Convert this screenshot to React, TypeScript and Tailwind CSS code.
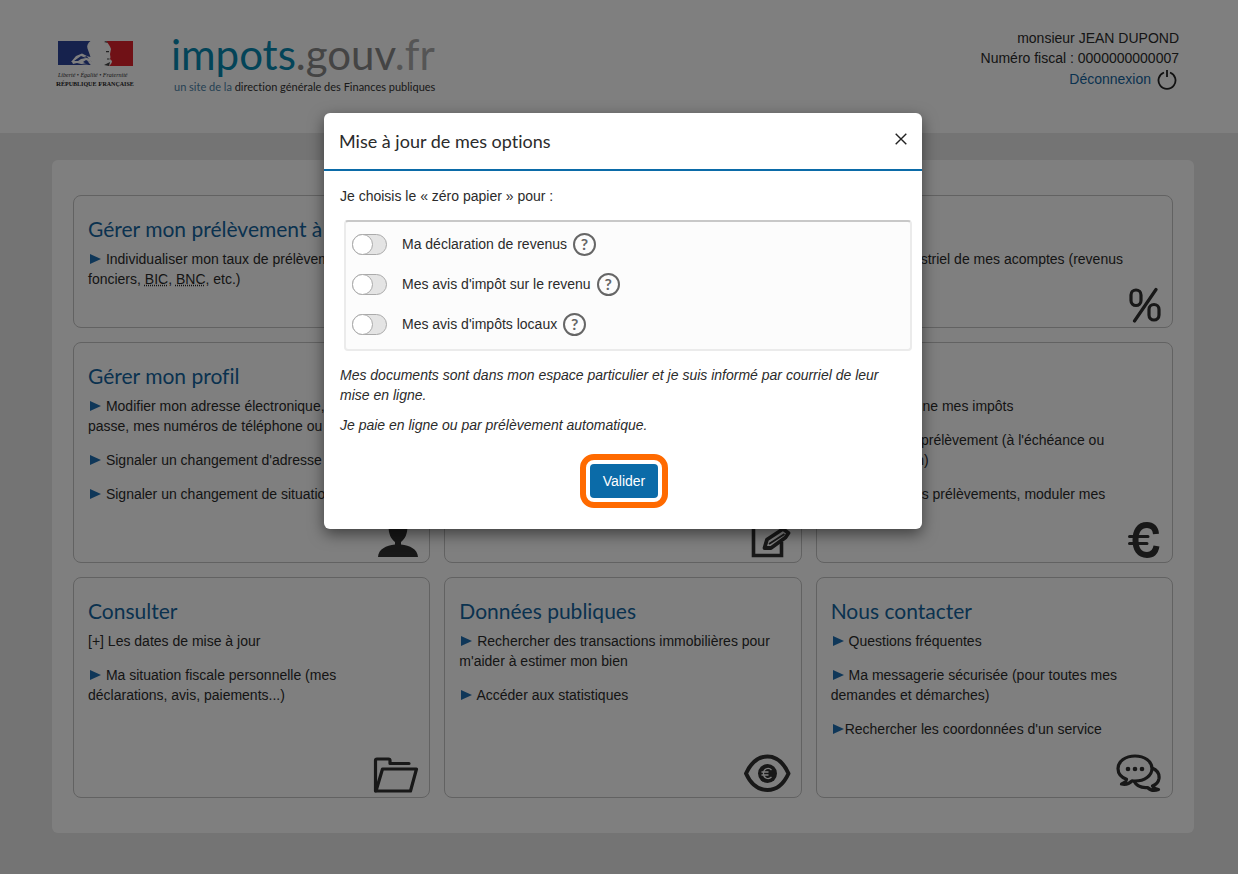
import type { ReactNode } from "react";

function Item({ tight = false, children }: { tight?: boolean; children: ReactNode }) {
  return (
    <li>
      <a href="#" className="text-[#2b2b2b]">
        <svg width="12" height="10" viewBox="0 0 12 10" fill="#1f6fb2" className="ml-0.5 inline-block align-baseline">
          <path d="M0 0v10l11-5z" />
        </svg>
        {tight ? null : " "}
        {children}
      </a>
    </li>
  );
}

function Card({
  title,
  icon,
  wide = false,
  children,
}: {
  title: string;
  icon: ReactNode;
  wide?: boolean;
  children: ReactNode;
}) {
  return (
    <section
      className={
        wide
          ? "relative col-span-3 min-h-[133px] rounded-lg border border-[#c4c4c4] px-3.5 pt-5"
          : "relative min-h-[221px] rounded-lg border border-[#c4c4c4] px-3.5 pt-5"
      }
    >
      <h2 className="mb-2 font-['Lato',sans-serif] text-[21px] leading-[25px] text-[#14659f]">{title}</h2>
      <ul className="flex flex-col gap-3.5">{children}</ul>
      <span className="absolute right-2.5 bottom-1 text-[#303030]">{icon}</span>
    </section>
  );
}

function PercentIcon() {
  return (
    <svg width="34" height="36" viewBox="0 0 34 36" fill="none" stroke="currentColor" strokeWidth="3.2">
      <rect x="3" y="3" width="10" height="15.500" rx="5" />
      <rect x="21" y="17.500" width="10" height="15.500" rx="5" />
      <path d="M28 2.500 6.500 34" strokeLinecap="round" />
    </svg>
  );
}

function UserIcon() {
  return (
    <svg width="42" height="46" viewBox="0 0 42 46" fill="currentColor">
      <path d="M21 2c6.500 0 9.500 5 9.500 12 0 8-2.500 13-6.500 16v2.500c9 1 16.500 4.500 17 12.500H1c.5-8 8-11.500 17-12.500V30c-4-3-6.500-8-6.500-16C11.500 7 14.500 2 21 2z" />
    </svg>
  );
}

function EditIcon() {
  return (
    <svg width="40" height="42" viewBox="0 0 40 42" fill="none" stroke="currentColor">
      <path d="M24 9H2.500v30.500h28V26" strokeWidth="3.600" />
      <path d="m13.500 32 2.500-8.500L32 13l5.500 4-3 4.500L20 32z" strokeWidth="3.800" strokeLinejoin="round" />
      <path d="m18 28 15.500-10" strokeWidth="2" />
    </svg>
  );
}

function EuroIcon() {
  return (
    <svg width="34" height="36" viewBox="0 0 34 36" fill="none" stroke="currentColor">
      <path d="M28 12C27.500 6 24 3 19 3 11 3 7.500 9 7.500 18S11 33 19 33c5 0 8.500-3 9.500-9" strokeWidth="6" />
      <path d="M1.500 14.500H20M1.500 21.500H19" strokeWidth="3" strokeLinecap="round" />
    </svg>
  );
}

function FolderIcon() {
  return (
    <svg
      width="46"
      height="36"
      viewBox="0 0 46 36"
      fill="none"
      stroke="currentColor"
      strokeWidth="3.2"
      strokeLinejoin="round"
      strokeLinecap="round"
    >
      <path d="M2.500 34V3.500A1.500 1.500 0 0 1 4 2h11.500a1.500 1.500 0 0 1 1.500 1.500V6.500h19" />
      <path d="M3 34 9.500 12H43.500L37.500 34z" />
    </svg>
  );
}

function EyeIcon() {
  return (
    <svg width="48" height="40" viewBox="0 0 48 40" fill="none" stroke="currentColor">
      <path d="M3 20.500C8 9.500 15 3.500 24.500 3.500s16 6 21 17c-5 11-11.500 16.500-21 16.500S8 31.500 3 20.500z" strokeWidth="4" strokeLinejoin="round" />
      <circle cx="24.500" cy="20.500" r="9.500" fill="currentColor" stroke="none" />
      <path d="M28.500 17c-3-3-8-1.500-8 3.500s5 6.500 8 3.500M18.500 19h7M18.500 22h7" stroke="#fff" strokeWidth="1.300" />
    </svg>
  );
}

function ChatIcon() {
  return (
    <svg width="46" height="40" viewBox="0 0 46 40" fill="none" stroke="currentColor" strokeWidth="3.200" strokeLinejoin="round">
      <path d="M36 15c5 2 7.500 6 7 10.500-.5 3.500-3 6-6.500 7.500 1 2 3 3 6 3.500-4 1.500-8.500.5-11-2-6 .5-11-1.500-13.500-6.500" />
      <path d="M19 3c9.500 0 17 5.300 17 12.500S28.500 28 19 28c-1 0-2-.1-3-.2-2.500 2.700-6.500 4-10.500 3.200 3-1 4.500-2.500 5-4.700C5 24.200 2 20.200 2 15.500 2 8.300 9.500 3 19 3z" />
      <g fill="currentColor" stroke="none">
        <circle cx="12" cy="16" r="2.300" />
        <circle cx="19" cy="16" r="2.300" />
        <circle cx="26" cy="16" r="2.300" />
      </g>
    </svg>
  );
}

function FlagLogo() {
  return (
    <div className="flex w-20 flex-col">
      <svg width="76" height="27" viewBox="0 0 76 27" className="ml-0.5">
        <path d="M0 1h32.500c-2.500 2-4 4.500-3 7.500l2 5.500 1 3-4-1 5 6-4-1 3 4H0z" fill="#2c449a" />
        <path d="m13 22 5-6 6-2.500 5 2.500-3 1 6 2 2 4-6-3-3 2 6 3-8-1-4-1-4 1-1-2z" fill="#fff" />
        <path d="m16 21 7-5 5 2-5 1-3 2zM24 24l5-1 4 2z" fill="#2c449a" />
        <path d="M48 1h27v25H51c2-2 3-3 3-5l-2-2c1-2 0-3 0-5l1-5c-1-3-3-6-5-8z" fill="#e1232d" />
        <path d="m46 2 4 1-2-2zM48 11h3v1.200h-3zM49 18.500h2.500v1H49zM46 25l6-3-1 4z" fill="#444" />
      </svg>
      <span className="mt-1 ml-0.5 whitespace-nowrap font-['Liberation_Serif',serif] text-[6px] leading-[9px] italic text-[#333]">
        Liberté • Égalité • Fraternité
      </span>
      <span className="whitespace-nowrap font-['Liberation_Serif',serif] text-[7px] leading-[9px] font-bold text-[#222]">
        R<span className="text-[6px]">ÉPUBLIQUE</span> F<span className="text-[6px]">RANÇAISE</span>
      </span>
    </div>
  );
}

function Header() {
  return (
    <header className="flex h-[133px] items-start justify-between bg-white pr-[59px] pl-14">
      <div className="flex items-start">
        <div className="pt-10">
          <FlagLogo />
        </div>
        <div className="flex flex-col pt-7 pl-[35px]">
          <span className="font-['Lato',sans-serif] text-[42px] leading-[52px] text-[#888]">
            <span className="text-[#0788b0]">impots</span>.gouv<span className="text-[#aaa]">.fr</span>
          </span>
          <span className="pl-[3px] font-['Lato',sans-serif] text-[11px] leading-[14px] text-[#333]">
            <span className="text-[#4c83a8]">un site de la</span> direction générale des Finances publiques
          </span>
        </div>
      </div>
      <div className="pt-7 text-right text-[#2b2b2b]">
        <p>monsieur JEAN DUPOND</p>
        <p>Numéro fiscal : 0000000000007</p>
        <a href="#" className="flex items-center justify-end gap-1.5 pr-0.5 text-[#14659f]">
          Déconnexion
          <svg width="20" height="22" viewBox="0 0 20 22" fill="none" stroke="#222" strokeWidth="1.8">
            <path d="M7 4.500a8.500 8.500 0 1 0 6 0M10 2v7" />
          </svg>
        </a>
      </div>
    </header>
  );
}

function Dashboard() {
  return (
    <main className="pt-[27px] pr-11 pb-[41px] pl-[52px]">
      <div className="grid grid-cols-3 gap-3.5 rounded-md bg-white px-[21px] py-[35px]">
        <Card wide title="Gérer mon prélèvement à la source" icon={<PercentIcon />}>
          <Item>
            Individualiser mon taux de prélèvement, moduler mon taux de prélèvement à la source et opter pour le versement
            mensuel ou trimestriel de mes acomptes (revenus
            <br />
            fonciers, <abbr title="bénéfices industriels et commerciaux">BIC</abbr>,{" "}
            <abbr title="bénéfices non commerciaux">BNC</abbr>, etc.)
          </Item>
        </Card>
        <Card title="Gérer mon profil" icon={<UserIcon />}>
          <Item>Modifier mon adresse électronique, mon mot de passe, mes numéros de téléphone ou mes options</Item>
          <Item>Signaler un changement d'adresse</Item>
          <Item>Signaler un changement de situation</Item>
        </Card>
        <Card title="Déclarer" icon={<EditIcon />}>
          <Item>Déclarer mes revenus</Item>
        </Card>
        <Card title="Payer" icon={<EuroIcon />}>
          <Item>Payer en ligne mes impôts</Item>
          <Item>Adhérer au prélèvement (à l'échéance ou mensualisation)</Item>
          <Item>Modifier mes prélèvements, moduler mes mensualités</Item>
        </Card>
        <Card title="Consulter" icon={<FolderIcon />}>
          <li>
            <a href="#" className="text-[#2b2b2b]">
              [+] Les dates de mise à jour
            </a>
          </li>
          <Item>Ma situation fiscale personnelle (mes déclarations, avis, paiements...)</Item>
        </Card>
        <Card title="Données publiques" icon={<EyeIcon />}>
          <Item>Rechercher des transactions immobilières pour m'aider à estimer mon bien</Item>
          <Item>Accéder aux statistiques</Item>
        </Card>
        <Card title="Nous contacter" icon={<ChatIcon />}>
          <Item>Questions fréquentes</Item>
          <Item>Ma messagerie sécurisée (pour toutes mes demandes et démarches)</Item>
          <Item tight>Rechercher les coordonnées d'un service</Item>
        </Card>
      </div>
    </main>
  );
}

function Option({ id, label }: { id: string; label: string }) {
  return (
    <div className="flex h-10 items-center">
      <input id={id} type="checkbox" className="peer sr-only" />
      <label htmlFor={id} className="flex cursor-pointer items-center gap-[15px]">
        <span className="flex h-[21px] w-[35px] rounded-full border border-[#aaa] bg-[#e4e4e4]">
          <span className="-my-px -ml-px size-[21px] rounded-full border border-[#aaa] bg-white" />
        </span>
        {label}
      </label>
      <button
        type="button"
        aria-label={"Aide : " + label}
        className="ml-1.5 flex size-[23px] items-center justify-center rounded-full border-2 border-[#666] font-['Lato',sans-serif] text-base leading-none font-bold text-[#666]"
      >
        ?
      </button>
    </div>
  );
}

function OptionsDialog() {
  return (
    <div className="absolute inset-0 flex items-start justify-center bg-black/50 pt-[113px] pl-2">
      <div
        role="dialog"
        aria-modal="true"
        aria-labelledby="dialog-title"
        className="w-[598px] rounded-md bg-white shadow-[0_5px_15px_rgba(0,0,0,0.5)]"
      >
        <div className="flex h-[58px] items-center justify-between border-b-2 border-[#0b6ba8] px-[15px]">
          <h1 id="dialog-title" className="font-['Lato',sans-serif] text-lg">
            Mise à jour de mes options
          </h1>
          <button type="button" aria-label="Fermer" className="mb-1">
            <svg width="12" height="12" viewBox="0 0 12 12" stroke="#222" strokeWidth="1.4">
              <path d="m.7.7 10.600 10.600M11.300.7.700 11.300" />
            </svg>
          </button>
        </div>
        <div className="flex flex-col px-4 pt-[15px] pb-[21px]">
          <p>Je choisis le « zéro papier » pour :</p>
          <div className="-mr-1.5 mt-3.5 ml-1 rounded-sm border-2 border-[#ebebeb] border-t-[#c8c8c8] bg-[#fcfcfc] px-1.5 pt-0.5 pb-[5px]">
            <Option id="opt-declaration" label="Ma déclaration de revenus" />
            <Option id="opt-revenu" label="Mes avis d'impôt sur le revenu" />
            <Option id="opt-locaux" label="Mes avis d'impôts locaux" />
          </div>
          <p className="mt-3.5 italic">
            Mes documents sont dans mon espace particulier et je suis informé par courriel de leur mise en ligne.
          </p>
          <p className="mt-2.5 italic">Je paie en ligne ou par prélèvement automatique.</p>
          <div className="mt-[19px] ml-0.5 self-center rounded-[14px] border-[6px] border-[#ff6a00] p-1">
            <button type="button" className="block h-[34px] rounded-sm bg-[#0b6ba8] px-[13px] text-white">
              Valider
            </button>
          </div>
        </div>
      </div>
    </div>
  );
}

export default function App() {
  return (
    <div className="relative min-h-screen bg-[#e8e8e8] font-['Liberation_Sans',Arial,sans-serif] text-sm leading-5 text-[#2b2b2b] [font-variant-ligatures:none]">
      <Header />
      <Dashboard />
      <OptionsDialog />
    </div>
  );
}
